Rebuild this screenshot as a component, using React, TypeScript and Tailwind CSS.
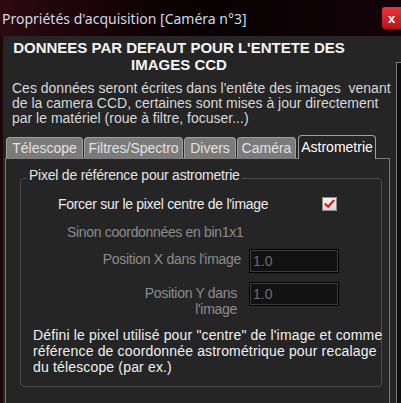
import React from "react";

const tabs = [
  { label: "Télescope", w: "w-[77px]" },
  { label: "Filtres/Spectro", w: "w-[99px]" },
  { label: "Divers", w: "w-[52px]" },
  { label: "Caméra", w: "w-[59px]" },
];

export default function App() {
  return (
    <div className="w-[401px] h-[403px] overflow-hidden bg-[#252525] flex flex-col font-['Liberation_Sans',Arial,sans-serif]">
      {/* Title bar */}
      <div className="h-[36px] shrink-0 flex items-start bg-gradient-to-r from-[#2c0a10] via-[#070102] to-[#14030a]">
        <div className="flex-1 pl-[2px] pt-[9px] text-[14px] leading-[20px] text-[#d2dae6] font-['Noto_Sans',sans-serif] whitespace-nowrap">
          Propriétés d'acquisition [Caméra n°3]
        </div>
        <div className="mt-[7px] w-[19px] h-[22px] rounded-l-[3px] bg-gradient-to-b from-[#e8343a] to-[#b8121a] flex items-center justify-center text-white text-[13px] font-bold leading-none">
          x
        </div>
      </div>

      <div className="flex-1 flex">
        <div className="w-[3px] bg-[#1c0608]" />

        <div className="w-[393px] flex flex-col">
          {/* Header */}
          <div className="w-[352px] pt-[3px] text-center text-[15px] leading-[17px] font-bold text-[#f4f4f4]">
            DONNEES PAR DEFAUT POUR L'ENTETE DES
            <br />
            IMAGES CCD
          </div>
          <p className="mt-[8px] pl-[9px] text-[14px] leading-[15px] text-[#d8d8d8] whitespace-nowrap">
            Ces données seront écrites dans l'entête des images&nbsp; venant
            <br />
            de la camera CCD, certaines sont mises à jour directement
            <br />
            par le matériel (roue à filtre, focuser...)
          </p>

          {/* Tabs */}
          <div className="mt-[9px] pl-[3px] h-[24px] flex items-end relative z-10 text-[14px]">
            {tabs.map((t) => (
              <div
                key={t.label}
                className={`${t.w} h-[21px] mb-[1px] mr-[1px] rounded-t-[4px] border border-b-0 border-[#a0a0a0] bg-[#7b7b7b] text-[#e2e2e2] flex items-center justify-center leading-[16px]`}
              >
                {t.label}
              </div>
            ))}
            <div className="w-[78px] h-[24px] ml-[1px] rounded-t-[4px] border border-b-0 border-[#a0a0a0] bg-[#252525] text-white flex justify-center pt-[3px] leading-[16px]">
              Astrometrie
            </div>
          </div>

          {/* Tab panel */}
          <div className="-mt-[1px] ml-[2px] w-[385px] flex-1 border border-b-0 border-[#7a7a7a]">
            <div className="mt-[19px] ml-[14px] w-[362px] relative rounded-[4px] border border-[#4a4a4a] pb-[11px] text-[14px] leading-[16px]">
              <div className="absolute -top-[12px] left-[6px] px-[2px] bg-[#252525] text-[#e4e4e4] whitespace-nowrap tracking-[-0.23px]">
                Pixel de référence pour astrometrie
              </div>

              <div className="mt-[17px] pl-[37px] flex items-center">
                <span className="w-[264px] text-[#ececec] tracking-[-0.3px]">Forcer sur le pixel centre de l'image</span>
                <span className="w-[15px] h-[14px] border border-[#8a8a8a] bg-gradient-to-b from-[#f4f4f4] to-[#d6d6d6] flex items-center justify-center">
                  <svg width="11" height="10" viewBox="0 0 11 10">
                    <path d="M1.5 5.2 L4.2 7.8 L9.6 1.6" fill="none" stroke="#e0141c" strokeWidth="2.2" strokeLinecap="round" strokeLinejoin="round" />
                  </svg>
                </span>
              </div>

              <div className="mt-[12px] pl-[46px] text-[#8c8c8c] tracking-[-0.33px]">Sinon coordonnées en bin1x1</div>

              <div className="mt-[9px] flex items-start">
                <div className="w-[220px] pt-[2px] text-right text-[#8c8c8c] tracking-[-0.3px]">Position X dans l'image</div>
                <div className="ml-[8px] w-[90px] h-[24px] border border-black bg-[#121212] shadow-[inset_0_0_0_1px_#3c3c3c] pl-[3px] pt-[3px] text-[#6e6e6e]">
                  1.0
                </div>
              </div>

              <div className="mt-[9px] flex items-start">
                <div className="w-[220px] pt-[3px] pr-[4px] text-right text-[#8c8c8c] tracking-[-0.3px]">
                  Position Y dans
                  <br />
                  l'image
                </div>
                <div className="ml-[8px] w-[90px] h-[24px] border border-black bg-[#121212] shadow-[inset_0_0_0_1px_#3c3c3c] pl-[3px] pt-[3px] text-[#6e6e6e]">
                  1.0
                </div>
              </div>

              <p className="mt-[10px] pl-[12px] text-[#f0f0f0] whitespace-nowrap tracking-[0.16px]">
                Défini le pixel utilisé pour "centre" de l'image et comme
                <br />
                référence de coordonnée astrométrique pour recalage
                <br />
                du télescope (par ex.)
              </p>
            </div>
          </div>
        </div>

        {/* right edge frame */}
        <div className="flex-1 mt-[26px] border-l border-t border-[#7a7a7a] bg-[#0e0e0e]" />
      </div>
    </div>
  );
}
